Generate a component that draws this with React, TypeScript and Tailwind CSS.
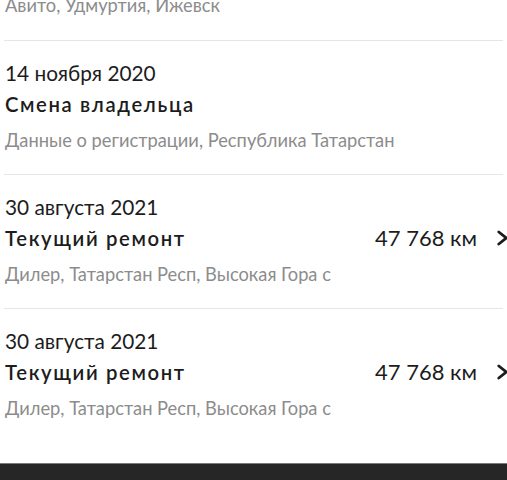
type Entry = {
  date: string;
  title: string;
  source: string;
  mileage?: string;
};

const entries: Entry[] = [
  {
    date: '14 ноября 2020',
    title: 'Смена владельца',
    source: 'Данные о регистрации, Республика Татарстан',
  },
  {
    date: '30 августа 2021',
    title: 'Текущий ремонт',
    source: 'Дилер, Татарстан Респ, Высокая Гора с',
    mileage: '47 768 км',
  },
  {
    date: '30 августа 2021',
    title: 'Текущий ремонт',
    source: 'Дилер, Татарстан Респ, Высокая Гора с',
    mileage: '47 768 км',
  },
];

function Chevron() {
  return (
    <svg viewBox="0 0 12 16" className="-mr-[6px] h-[16px] w-[12px] shrink-0" fill="none">
      <path d="M1.8 2 L9.2 8 L1.8 14" stroke="#1c1c1c" strokeWidth="2.8" strokeLinecap="round" strokeLinejoin="round" />
    </svg>
  );
}

function HistoryItem({ entry, last }: { entry: Entry; last?: boolean }) {
  return (
    <div className={last ? 'pt-[16px] pb-[18px]' : 'border-b border-[#e6e6e6] pt-[16px] pb-[18px]'}>
      <div className="px-[1px] text-[20.8px] leading-[32px] text-[#1c1c1c]">{entry.date}</div>
      <div className="flex h-[30px] items-center justify-between pl-[1px]">
        <span className="text-[20.3px] font-semibold leading-[30px] tracking-[0.08em] text-[#1c1c1c]">
          {entry.title}
        </span>
        {entry.mileage && (
          <span className="flex items-center gap-[20px]">
            <span className="text-[22px] leading-[30px] text-[#1c1c1c]">{entry.mileage}</span>
            <Chevron />
          </span>
        )}
      </div>
      <div className="mt-[5px] px-[1px] text-[18.3px] leading-[32px] text-[#8c8c8c]">{entry.source}</div>
    </div>
  );
}

export default function App() {
  return (
    <div className="flex h-[480px] w-[507px] flex-col overflow-hidden bg-white font-['Lato','Noto_Sans',sans-serif]">
      <div className="mx-[4px] -mt-[11px] border-b border-[#e6e6e6] pb-[19px]">
        <div className="px-[1px] text-[18.3px] leading-[32px] text-[#8c8c8c]">Авито, Удмуртия, Ижевск</div>
      </div>
      <div className="mx-[4px]">
        {entries.map((entry, i) => (
          <HistoryItem key={i} entry={entry} last={i === entries.length - 1} />
        ))}
      </div>
      <div className="flex-1" />
      <div className="h-[17px] border-t border-[#7a7a7a] bg-[#262626]" />
    </div>
  );
}
